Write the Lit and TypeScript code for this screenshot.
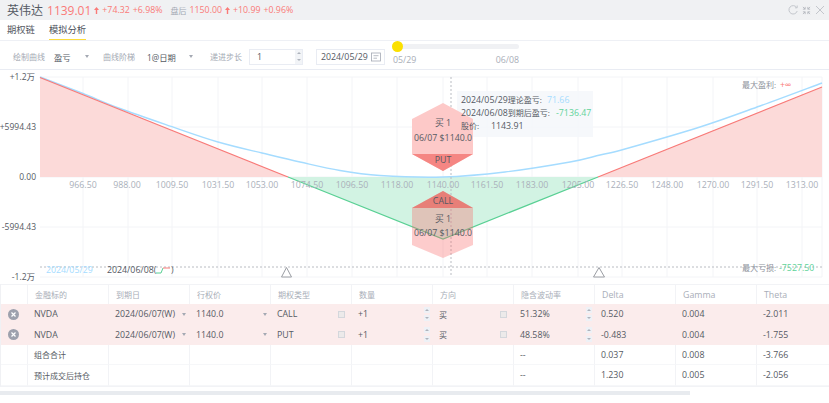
import { LitElement, html, css, svg } from "lit";
import { customElement } from "lit/decorators.js";

const gridX = [83,128,172,218,262,307,352,397,443,487,532,578,622,667,713,757,802,822];
const xLabels: [string, number][] = [["966.50",83],["988.00",127],["1009.50",172],["1031.50",218],["1053.00",262],["1074.50",307],["1096.50",352],["1118.00",397],["1140.00",443],["1161.50",487],["1183.00",532],["1205.00",578],["1226.50",622],["1248.00",667],["1270.00",713],["1291.50",757],["1313.00",802]];

const bluePts: [number, number][] = [[40,7],[83,23.5],[120,38.5],[172,56.7],[218,72],[262,83],[300,92],[340,100.5],[380,105.5],[443,107],[505,102],[570,92],[600,85],[625,79],[700,57],[760,36],[822,13]];
function smooth(p: [number, number][]) {
  let d = `M${p[0][0]} ${p[0][1]}`;
  for (let i = 0; i < p.length - 1; i++) {
    const a = p[Math.max(0, i - 1)], b = p[i], c = p[i + 1], e = p[Math.min(p.length - 1, i + 2)];
    const c1x = b[0] + (c[0] - a[0]) / 6, c1y = b[1] + (c[1] - a[1]) / 6;
    const c2x = c[0] - (e[0] - b[0]) / 6, c2y = c[1] - (e[1] - b[1]) / 6;
    d += ` C${c1x.toFixed(1)} ${c1y.toFixed(1)} ${c2x.toFixed(1)} ${c2y.toFixed(1)} ${c[0]} ${c[1]}`;
  }
  return d;
}

const rows = [
  { del: true, cells: ["NVDA", "2024/06/07(W)", "1140.0", "CALL", "+1", "买", "51.32%", "0.520", "0.004", "-2.011"] },
  { del: true, cells: ["NVDA", "2024/06/07(W)", "1140.0", "PUT", "+1", "买", "48.58%", "-0.483", "0.004", "-1.755"] },
  { del: false, cells: ["组合合计", "", "", "", "", "", "--", "0.037", "0.008", "-3.766"] },
  { del: false, cells: ["预计成交后持仓", "", "", "", "", "", "--", "1.230", "0.005", "-2.056"] },
];
const heads = ["金融标的", "到期日", "行权价", "期权类型", "数量", "方向", "隐含波动率", "Delta", "Gamma", "Theta"];
const isCjk = (s: string) => /[\u4e00-\u9fff]/.test(s);

@customElement("app-root")
export class AppRoot extends LitElement {
  static styles = css`
    :host { display: block; width: 829px; height: 403px; overflow: hidden; background: #fff; color: #555a63;
      font-family: "Open Sans", "Noto Sans CJK SC", sans-serif; font-size: 8.8px; }
    * { box-sizing: border-box; }
    .title { height: 20px; background: #f0f1f3; display: flex; align-items: center; padding: 0 4px 0 7px; gap: 3px; color: #fa7a78; white-space: nowrap; }
    .name { font-size: 12px; color: #555a63; }
    .price { font-size: 12px; margin-left: 1px; }
    .muted { color: #a4a9b3; margin-left: 5px; font-size: 8px; }
    .ar { display: block; margin-right: 0; }
    .icons { margin-left: auto; display: flex; gap: 4px; align-items: center; }
    .tabs { height: 21px; display: flex; gap: 14px; padding-left: 7px; border-bottom: 1px solid #eef0f5; font-size: 9.3px; }
    .tab { height: 20px; line-height: 19px; }
    .tab.on { border-bottom: 1.5px solid #fbdc3c; color: #4a4f58; }
    .bar { height: 29px; display: grid; grid-template-columns: 41px 49px 44px 63px 39px 54px 13px 69px 8px 126px; align-items: center; padding: 3px 0 0 13px; border-bottom: 1px solid #e9ecf3; }
    .lbl { color: #a4a9b3; font-size: 8px; }
    .caret { width: 0; height: 0; border: 2.5px solid transparent; border-top: 3px solid #a4a9b3; border-bottom: 0; display: block; }
    .sel { display: flex; align-items: center; justify-content: space-between; color: #555a63; font-size: 8.3px; }
    .s1 { padding-right: 14px; }
    .s2 { padding-right: 17px; }
    .num { height: 16px; grid-column: 6; border: 1px solid #e9ecf3; display: flex; align-items: center; justify-content: space-between; padding: 0 0 0 7px; }
    .spin { width: 7px; align-self: stretch; display: flex; flex-direction: column; justify-content: space-around; align-items: center; background: #f2f4f7; }
    .up { display: block; width: 0; height: 0; border: 2px solid transparent; border-bottom: 2.5px solid #aeb3bc; border-top: 0; }
    .dn { display: block; width: 0; height: 0; border: 2px solid transparent; border-top: 2.5px solid #aeb3bc; border-bottom: 0; }
    .date { grid-column: 8; height: 16px; border: 1px solid #e9ecf3; display: flex; align-items: center; justify-content: space-between; padding: 0 3px 0 4px; }
    .slider { grid-column: 10; align-self: start; }
    .track { height: 5px; margin-left: 4px; background: #f0f1f4; border-radius: 3px; position: relative; }
    .knob { position: absolute; left: -5px; top: -3px; width: 11px; height: 11px; border-radius: 50%; background: #fbe000; }
    .dates { display: flex; justify-content: space-between; color: #a9aeb8; margin-top: 5px; line-height: 12px; }
    .chart { display: block; width: 829px; height: 214px; }
    .chart text { font-family: "Open Sans", "Noto Sans CJK SC", sans-serif; font-size: 8.8px; fill: #555a63; }
    .chart text.x { fill: #aab0ba; text-anchor: middle; }
    .chart text.y { text-anchor: end; font-size: 8.5px; }
    .chart text.c { text-anchor: middle; }
    .chart text.g { fill: #8d929b; font-size: 8px; }
    .chart text.r { fill: #fa7a78; }
    .chart text.gr { fill: #5fd39a; }
    .chart text.b { fill: #a5dcff; }
    .chart .z { font-size: 8px; }
    .table { display: grid; grid-template-columns: 27px repeat(9, 81px) 73px; border-bottom: 1px solid #f2f3f6; width: 829px; border-left: 1px solid #f0f1f4; }
    .h, .d { display: flex; align-items: center; border-right: 1px solid #f2f3f6; position: relative; white-space: nowrap; }
    .h { height: 20px; color: #a9aeb8; padding-left: 7px; border-top: 1px solid #f2f3f6; }
    .d { height: 20.4px; padding: 1px 0 0 6px; border-bottom: 1px solid #f6f7f9; }
    .d.first { padding-left: 7px; }
    .cjk { font-size: 8px; }
    .rowp { background: #fbecec; border-color: #fbecec; }
    .del { width: 11px; height: 11px; display: block; }
    .sq { position: absolute; right: 6px; top: 7px; width: 7px; height: 7px; border: 1px solid #d4d7dc; background: #eceaea; }
    .sel2 { position: absolute; right: 3px; top: 9px; }
    .sp { position: absolute; right: 2px; top: 3px; bottom: 2px; width: 6px; display: flex; flex-direction: column; justify-content: space-between; align-items: center; }
    .sp i { display: flex; width: 6px; height: 6px; background: #eef1f6; justify-content: center; align-items: center; }
    .scroll { height: 4px; margin-top: 4.4px; width: 690px; background: #e8ebef; }
  `;

  private chart() {
    return svg`
      ${gridX.map(x => svg`<line x1=${x} x2=${x} y1="7" y2="207" stroke="#f3f4f7"/>`)}
      ${[7,57,107,157,207].map(y => svg`<line x1="40" x2="822" y1=${y} y2=${y} stroke="#f3f4f7"/>`)}
      <polygon points="40,7.5 288,107 40,107" fill="#fcdad9"/>
      <polygon points="598,107 822,17 822,107" fill="#fcdad9"/>
      <polygon points="288,107 443,169 598,107" fill="#d2f3e3"/>
      <path d=${smooth(bluePts)} fill="none" stroke="#a5dcff" stroke-width="1.4"/>
      <polyline points="40,7.5 288,107" fill="none" stroke="#f87a78" stroke-width="1.2"/>
      <polyline points="288,107 443,169 598,107" fill="none" stroke="#59d094" stroke-width="1.2"/>
      <polyline points="598,107 822,17" fill="none" stroke="#f87a78" stroke-width="1.2"/>
      ${xLabels.map(([t, x]) => svg`<text class="x" x=${x} y="118">${t}</text>`)}
      <text class="y" x="35" y="10">+1.2万</text>
      <text class="y" x="36" y="60">+5994.43</text>
      <text class="y" x="36" y="110">0.00</text>
      <text class="y" x="36" y="160">-5994.43</text>
      <text class="y" x="35" y="210">-1.2万</text>
      <line x1="40" x2="822" y1="197" y2="197" stroke="#b9bcc2" stroke-dasharray="2 2"/>
      <rect x="457" y="21" width="136" height="46" fill="#f5f7fa" fill-opacity=".85"/>
      <line x1="451" x2="451" y1="7" y2="207" stroke="#b9bcc2" stroke-dasharray="2 2"/>
      <polygon points="443,33 473,49 473,84 443,101 412,84 412,49" fill="#fdc9c8" />
      <polygon points="412,84 473,84 443,101" fill="#f58683"/>
      <polygon points="443,121 473,138 473,175 443,188 412,175 412,138" fill="#fa6464" fill-opacity=".33"/>
      <polygon points="412,138 473,138 443,121" fill="#e77f78"/>
      <text class="c" x="443" y="56">买 1</text>
      <text class="c" x="443" y="71">06/07 $1140.0</text>
      <text class="c" x="443" y="93">PUT</text>
      <text class="c" x="443" y="134">CALL</text>
      <text class="c" x="443" y="152">买 1</text>
      <text class="c" x="443" y="166">06/07 $1140.0</text>
      <text x="461" y="33">2024/05/29<tspan class="z">理论盈亏:</tspan></text><text class="b" x="547" y="33">71.66</text>
      <text x="461" y="46">2024/06/08<tspan class="z">到期后盈亏:</tspan></text><text class="gr" x="556" y="46">-7136.47</text>
      <text x="461" y="59"><tspan class="z">股价:</tspan></text><text x="491" y="59">1143.91</text>
      <text class="b" x="46" y="203">2024/05/29</text>
      <text x="107" y="203">2024/06/08(</text>
      <path d="M156 203 H161 L163 198" fill="none" stroke="#59d094"/>
      <path d="M163 198 H170" fill="none" stroke="#f87a78"/>
      <text x="171" y="203">)</text>
      <polygon points="286.5,197.5 291.5,207 281.5,207" fill="#fff" stroke="#9a9da3"/>
      <polygon points="599,197.5 604.5,207 593.5,207" fill="#fff" stroke="#9a9da3"/>
      <text class="g" x="742" y="18">最大盈利:</text><text class="r" x="780" y="18">+∞</text>
      <text class="g" x="742" y="201">最大亏损:</text><text class="gr" x="779" y="201">-7527.50</text>
    `;
  }

  private delIcon() {
    return html`<svg class="del" viewBox="0 0 11 11"><circle cx="5.5" cy="5.5" r="5.5" fill="#9da1ad"/><path d="M3.5 3.5l4 4M7.5 3.5l-4 4" stroke="#fff" stroke-width="1.2"/></svg>`;
  }

  private arrow() {
    return html`<svg class="ar" width="5" height="7" viewBox="0 0 5 7"><path d="M2.5 0L5 3H3.2V7H1.8V3H0z" fill="#fa7a78"/></svg>`;
  }

  private extra(i: number, del: boolean) {
    if (!del) return "";
    if (i === 1 || i === 2) return html`<span class="caret sel2"></span>`;
    if (i === 3 || i === 5) return html`<span class="sq"></span>`;
    if (i === 4 || i === 6) return html`<span class="sp"><i><span class="up"></span></i><i><span class="dn"></span></i></span>`;
    return "";
  }

  render() {
    return html`
      <div class="title">
        <span class="name">英伟达</span>
        <span class="price">1139.01</span>${this.arrow()}
        <span>+74.32</span><span>+6.98%</span>
        <span class="muted">盘后</span><span>1150.00</span>${this.arrow()}<span>+10.99</span><span>+0.96%</span>
        <span class="icons">
          <svg width="10" height="10" viewBox="0 0 10 10" fill="none" stroke="#c3c6cc"><path d="M8.6 2.4A4.2 4.2 0 1 0 9.2 6"/><path d="M9.2 .5v2.3H7" /></svg>
          <svg width="9" height="9" viewBox="0 0 10 10" fill="none" stroke="#b4b8bf"><path d="M1 1l2.5 2.5M3.5 1v2.5H1M9 1L6.5 3.5M6.5 1v2.5H9M1 9l2.5-2.5M3.5 9V6.5H1M9 9L6.5 6.5M6.5 9V6.5H9"/></svg>
          <svg width="10" height="10" viewBox="0 0 10 10" fill="none" stroke="#c3c6cc"><path d="M1 1l8 8M9 1l-8 8"/></svg>
        </span>
      </div>
      <div class="tabs"><span class="tab">期权链</span><span class="tab on">模拟分析</span></div>
      <div class="bar">
        <span class="lbl">绘制曲线</span>
        <span class="sel s1">盈亏<span class="caret"></span></span>
        <span class="lbl">曲线阶梯</span>
        <span class="sel s2">1@日期<span class="caret"></span></span>
        <span class="lbl">递进步长</span>
        <span class="num">1<span class="spin"><span class="up"></span><span class="dn"></span></span></span>
        <span class="date">2024/05/29
          <svg width="10" height="10" viewBox="0 0 10 10" fill="none" stroke="#a4a9b3" stroke-width=".8"><rect x=".5" y="1" width="9" height="8"/><path d="M2.5 3.7h5M2.5 6.2h3.5"/></svg>
        </span>
        <div class="slider">
          <div class="track"><span class="knob"></span></div>
          <div class="dates"><span>05/29</span><span>06/08</span></div>
        </div>
      </div>
      <svg class="chart" viewBox="0 0 829 214">${this.chart()}</svg>
      <div class="table">
        <div class="h"></div>
        ${heads.map(h => html`<div class="h ${isCjk(h) ? "cjk" : ""}">${h}</div>`)}
        ${rows.map(r => html`
          <div class="d first ${r.del ? "rowp" : ""}">${r.del ? this.delIcon() : ""}</div>
          ${r.cells.map((c, i) => html`<div class="d ${r.del ? "rowp" : ""} ${isCjk(c) ? "cjk" : ""}">${c}${this.extra(i, r.del)}</div>`)}
        `)}
      </div>
      <div class="scroll"></div>
    `;
  }
}
